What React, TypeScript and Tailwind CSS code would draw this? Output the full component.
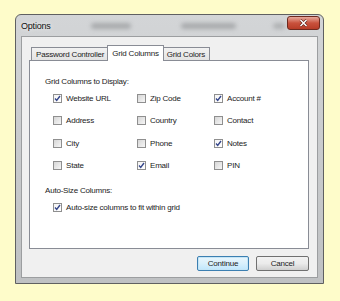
import { ReactNode } from "react";

const FONT = "[font-family:'Liberation_Sans',Arial,sans-serif]";
const TXT = "text-[8px] leading-[11px] tracking-[-0.2px] text-[#1b1b1b]";

function CheckBox({ checked }: { checked?: boolean }) {
  return (
    <span
      className={
        "flex h-[9px] w-[9px] shrink-0 items-center justify-center border border-[#8f8f8f] " +
        (checked
          ? "bg-gradient-to-br from-[#f4f4f4] to-[#ffffff]"
          : "bg-gradient-to-br from-[#d6d6d6] to-[#f6f6f6]")
      }
    >
      {checked && (
        <svg width="7" height="7" viewBox="0 0 7 7">
          <polyline
            points="1,3.6 2.7,5.4 6,1"
            fill="none"
            stroke="#35468a"
            strokeWidth="1.4"
          />
        </svg>
      )}
    </span>
  );
}

function Option({ label, checked }: { label: string; checked?: boolean }) {
  return (
    <div className="flex h-[22.5px] items-center gap-[4px]">
      <CheckBox checked={checked} />
      <span className={TXT}>{label}</span>
    </div>
  );
}

function Tab({ children, active }: { children: ReactNode; active?: boolean }) {
  if (active) {
    return (
      <div className={"relative z-10 -mx-[2px] -mb-px flex h-[16px] items-start border border-b-0 border-[#898c95] bg-white px-[4px] pt-[2px] " + TXT}>
        {children}
      </div>
    );
  }
  return (
    <div className={"flex h-[13px] items-center border border-b-0 border-[#898c95] bg-gradient-to-b from-[#f2f2f2] to-[#e3e3e3] px-[4px] " + TXT}>
      {children}
    </div>
  );
}

const columns: { label: string; checked?: boolean }[][] = [
  [
    { label: "Website URL", checked: true },
    { label: "Address" },
    { label: "City" },
    { label: "State" },
  ],
  [
    { label: "Zip Code" },
    { label: "Country" },
    { label: "Phone" },
    { label: "Email", checked: true },
  ],
  [
    { label: "Account #", checked: true },
    { label: "Contact" },
    { label: "Notes", checked: true },
    { label: "PIN" },
  ],
];

export default function App() {
  return (
    <div className={"h-[301px] w-[340px] overflow-hidden bg-[#fefcca] pl-[15px] pt-[14px] " + FONT}>
      <div className="flex h-[270px] w-[309px] flex-col rounded-t-[6px] border border-[#5f6061] bg-gradient-to-b from-[#d3d5d7] via-[#c9cbcd] to-[#bfc1c3] px-[5px] pb-[5px]">
        {/* title bar */}
        <div className="relative flex h-[22px] items-start justify-between">
          <div className="absolute left-[70px] top-[8px] h-[6px] w-[40px] rounded-full bg-[#8d8f91] opacity-60 blur-[2px]" />
          <div className="absolute left-[160px] top-[8px] h-[6px] w-[55px] rounded-full bg-[#8d8f91] opacity-60 blur-[2px]" />
          <div className="absolute left-[252px] top-[8px] h-[6px] w-[12px] rounded-full bg-[#8d8f91] opacity-50 blur-[2px]" />
          <span className="relative mt-[5px] text-[9px] leading-[12px] tracking-[-0.2px] text-[#111] [text-shadow:0_0_4px_#ffffff]">
            Options
          </span>
          <div className="relative -mr-[2px] mt-[1px] flex h-[14px] w-[33px] items-center justify-center rounded-[3px] border border-[#6e2a1f] bg-gradient-to-b from-[#e6a89c] via-[#c9523d] to-[#b73c27]">
            <svg width="9" height="8" viewBox="0 0 9 8">
              <path d="M1.5 1 L7.5 7 M7.5 1 L1.5 7" stroke="#5a1f16" strokeWidth="2.6" />
              <path d="M1.5 1 L7.5 7 M7.5 1 L1.5 7" stroke="#ffffff" strokeWidth="1.5" />
            </svg>
          </div>
        </div>

        {/* client area */}
        <div className="flex flex-1 flex-col border border-[#9c9ea0] bg-[#f0f0f0] pl-[7px] pr-[8px] pt-[8px] pb-[6px]">
          <div className="flex h-[15px] items-end pl-[2px]">
            <Tab>Password Controller</Tab>
            <Tab active>Grid Columns</Tab>
            <Tab>Grid Colors</Tab>
          </div>
          <div className="h-[189px] border border-[#898c95] bg-white pl-[15px] pt-[15px]">
            <div className={TXT}>Grid Columns to Display:</div>
            <div className="ml-[8px] flex">
              {columns.map((col, i) => (
                <div key={i} className={i === 0 ? "w-[84px]" : i === 1 ? "w-[77px]" : "w-[80px]"}>
                  {col.map((o) => (
                    <Option key={o.label} label={o.label} checked={o.checked} />
                  ))}
                </div>
              ))}
            </div>
            <div className={"mt-[8px] " + TXT}>Auto-Size Columns:</div>
            <div className="ml-[8px]">
              <Option label="Auto-size columns to fit within grid" checked />
            </div>
          </div>
          <div className="mt-[7px] flex justify-end gap-[7px]">
            <button className={"flex h-[15px] w-[52px] items-center justify-center rounded-[2px] border border-[#3c7fb1] bg-gradient-to-b from-[#eaf6fd] via-[#d9f0fc] to-[#bee6fd] shadow-[inset_0_0_0_1px_#c4e5f6] " + TXT}>
              Continue
            </button>
            <button className={"flex h-[15px] w-[53px] items-center justify-center rounded-[2px] border border-[#707070] bg-gradient-to-b from-[#f2f2f2] via-[#ebebeb] to-[#cfcfcf] " + TXT}>
              Cancel
            </button>
          </div>
        </div>
      </div>
    </div>
  );
}
